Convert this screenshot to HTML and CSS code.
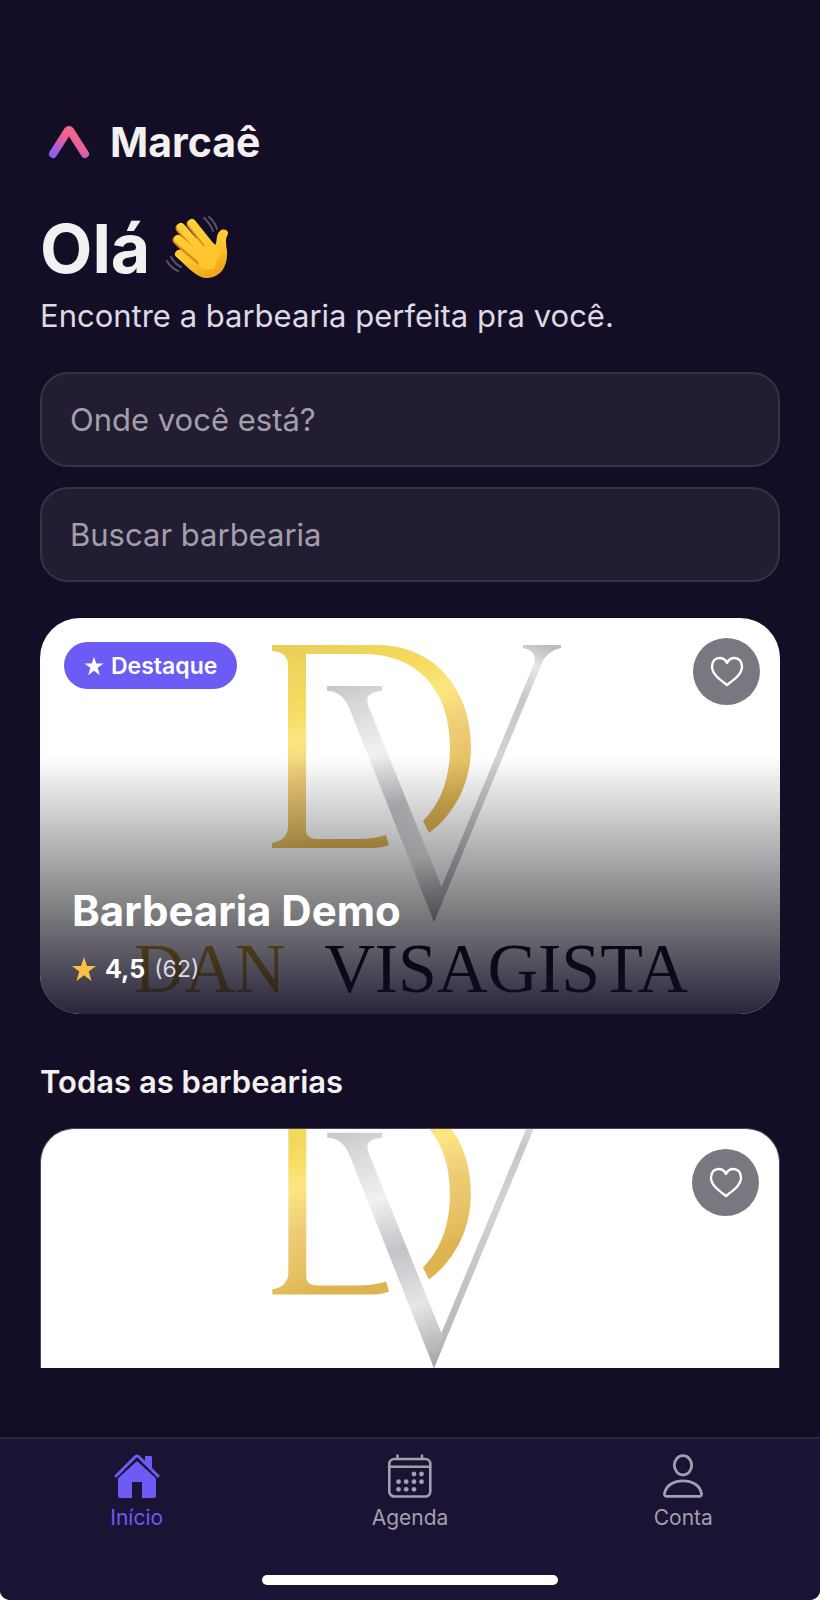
FILE: index.html
```html
<!DOCTYPE html>
<html lang="pt-BR">
<head>
    <meta charset="UTF-8">
    <meta name="viewport" content="width=device-width, initial-scale=1.0">
    <title>Marcaê</title>
    <link rel="stylesheet" href="styles.css">
</head>
<body>

    <!-- shared drawings -->
    <svg class="defs" width="0" height="0" aria-hidden="true">
        <defs>
            <linearGradient id="gold" gradientUnits="userSpaceOnUse" x1="230" y1="20" x2="300" y2="220">
                <stop offset="0" stop-color="#e8cd55" />
                <stop offset="0.2" stop-color="#eed55c" />
                <stop offset="0.35" stop-color="#f5dc60" />
                <stop offset="0.5" stop-color="#fde680" />
                <stop offset="0.68" stop-color="#efcd78" />
                <stop offset="0.9" stop-color="#e5c062" />
                <stop offset="1" stop-color="#deb450" />
            </linearGradient>
            <linearGradient id="silver" gradientUnits="userSpaceOnUse" x1="300" y1="68" x2="400" y2="300">
                <stop offset="0" stop-color="#c9c9cd" />
                <stop offset="0.1" stop-color="#d8d8da" />
                <stop offset="0.3" stop-color="#f1f1f1" />
                <stop offset="0.52" stop-color="#c3c3c9" />
                <stop offset="0.75" stop-color="#e6e6e7" />
                <stop offset="1" stop-color="#a5a5a9" />
            </linearGradient>
            <linearGradient id="silver-arm" gradientUnits="userSpaceOnUse" x1="505" y1="27" x2="394" y2="304">
                <stop offset="0" stop-color="#bcbcc0" />
                <stop offset="0.08" stop-color="#e6e6e8" />
                <stop offset="0.2" stop-color="#c6c6ca" />
                <stop offset="0.4" stop-color="#d3d3d7" />
                <stop offset="1" stop-color="#b2b2b8" />
            </linearGradient>
            <g id="dv-logo">
                <path fill="url(#gold)" d="M232 27H337C395 27 431 72 431 129C431 164 415 196 389 215L383 203C401 185 410 160 410 129C410 75 380 36 323 36H266V212Q266 221 278 221H318Q334 221 346 217L349 227Q342 230 333 230H232V225Q248 222 248 208V47Q248 34 232 33Z" />
                <path fill="url(#silver-arm)" d="M483 27H521V30Q507 33 502 45L394 304L391 295L401 270L494 46Q498 33 483 30Z" />
                <path fill="url(#silver)" d="M287 68H342V73C328 74 324 80 330 92L402 270L403 282L394 304L310 92Q303 73 287 73Z" />
            </g>
            <path id="heart" d="M17 29C12 25 2 19 2 10.500C2 5 5.500 2 9.500 2C13 2 15.700 4 17 7C18.300 4 21 2 24.500 2C28.500 2 32 5 32 10.500C32 19 22 25 17 29Z" />
        </defs>
    </svg>

    <div class="app">
        <main class="content">
            <header class="brand">
                <svg class="brand-mark" viewBox="0 0 42 36" aria-hidden="true">
                    <defs>
                        <linearGradient id="brand-gradient" x1="0" y1="1" x2="0.600" y2="0.200">
                            <stop offset="0" stop-color="#8b5cf6" />
                            <stop offset="0.25" stop-color="#a95fdc" />
                            <stop offset="0.7" stop-color="#e8609c" />
                            <stop offset="1" stop-color="#f0668e" />
                        </linearGradient>
                    </defs>
                    <path d="M5 30L19 8Q21 4 23 8L37 30" fill="none" stroke="url(#brand-gradient)" stroke-width="8" stroke-linecap="round" stroke-linejoin="round" />
                </svg>
                <span class="brand-name">Marcaê</span>
            </header>

            <div class="greeting">
                <h1>Olá</h1>
                <svg class="wave" viewBox="0 0 64 66" role="img" aria-label="Mão acenando">
                    <defs>
                        <linearGradient id="skin" gradientUnits="userSpaceOnUse" x1="15" y1="8" x2="44" y2="64">
                            <stop offset="0" stop-color="#ffd13d" />
                            <stop offset="0.6" stop-color="#ffc62f" />
                            <stop offset="1" stop-color="#f0a01c" />
                        </linearGradient>
                    </defs>
                    <path d="M12 37L20 28L37 20L49 30C52 27 49 20 54 16C57 13 63 15 62 19C59 24 60 29 61 36C62 51 55 62 42 63C33 64 25 56 10 41Z" fill="url(#skin)" />
                    <g fill="none" stroke-linecap="round">
                        <path d="M25 9L45 34" stroke="#d98b18" stroke-width="9" />
                        <path d="M26 8L46 33" stroke="url(#skin)" stroke-width="8" />
                        <path d="M14 13L35 38" stroke="#d98b18" stroke-width="9" />
                        <path d="M15 12L37 37" stroke="url(#skin)" stroke-width="8" />
                        <path d="M11 25L32 45" stroke="#d98b18" stroke-width="9" />
                        <path d="M12 24L34 43" stroke="url(#skin)" stroke-width="8" />
                        <path d="M13 39L31 54" stroke="url(#skin)" stroke-width="8" />
                        <path d="M38 3Q44 8 47 16M43 2Q49 7 51 14M1 46Q5 53 12 56M5 42Q9 49 15 52" stroke="#55536a" stroke-width="2" />
                    </g>
                    <path d="M26 37L46 27L54 36L48 54L36 54Z" fill="#ffc62f" />
                </svg>
            </div>
            <p class="subtitle">Encontre a barbearia perfeita pra você.</p>

            <form class="search">
                <input type="text" aria-label="Onde você está?" placeholder="Onde você está?">
                <input type="text" aria-label="Buscar barbearia" placeholder="Buscar barbearia">
            </form>

            <article class="card featured">
                <svg class="photo" viewBox="0 0 740 396" preserveAspectRatio="xMidYMid slice" role="img" aria-label="Dan Visagista">
                    <use href="#dv-logo" />
                    <text class="photo-text gold-text" x="94" y="374">DAN</text>
                    <text class="photo-text" x="648" y="374" text-anchor="end">VISAGISTA</text>
                </svg>
                <div class="overlay">
                    <div class="card-top">
                        <span class="badge">
                            <svg class="badge-star" viewBox="0 0 24 24" aria-hidden="true"><path fill="#fff" d="M12 1L14.700 9H23.500L16.400 14.200L19 23L12 17.700L5 23L7.600 14.200L0.500 9H9.300Z" /></svg>
                            Destaque
                        </span>
                        <button type="button" class="favorite" aria-label="Favoritar">
                            <svg viewBox="0 0 34 31"><use href="#heart" /></svg>
                        </button>
                    </div>
                    <div class="card-info">
                        <h2>Barbearia Demo</h2>
                        <p class="rating">
                            <svg class="rating-star" viewBox="0 0 24 24" aria-hidden="true"><path fill="#fdbf45" d="M12 0L15 9H24L16.700 14.400L19.500 24L12 18.200L4.500 24L7.300 14.400L0 9H9Z" /></svg>
                            <strong>4,5</strong>
                            <span>(62)</span>
                        </p>
                    </div>
                </div>
            </article>

            <h3 class="section-title">Todas as barbearias</h3>

            <article class="card listed">
                <svg class="photo" viewBox="0 64 740 240" preserveAspectRatio="xMidYMid slice" aria-hidden="true">
                    <use href="#dv-logo" />
                </svg>
                <div class="card-top">
                    <button type="button" class="favorite" aria-label="Favoritar">
                        <svg viewBox="0 0 34 31"><use href="#heart" /></svg>
                    </button>
                </div>
            </article>
        </main>

        <nav class="tabs">
            <ul>
                <li>
                    <a href="#inicio" class="active">
                        <svg viewBox="0 0 46 44" aria-hidden="true">
                            <path d="M23 7L42 24V42Q42 44 40 44H28V28H18V44H6Q4 44 4 42V24Z" fill="currentColor" />
                            <path d="M2 22L23 2L44 22" fill="none" stroke="#1a1333" stroke-width="6" />
                            <path d="M31 2H37Q38 2 38 3V15L31 9Z" fill="currentColor" />
                            <path d="M2 22L21 3Q23 1 25 3L44 22" fill="none" stroke="currentColor" stroke-width="3" stroke-linecap="round" />
                        </svg>
                        Início
                    </a>
                </li>
                <li>
                    <a href="#agenda">
                        <svg viewBox="0 0 46 44" aria-hidden="true">
                            <g fill="none" stroke="currentColor" stroke-width="2.600" stroke-linecap="round">
                                <rect x="2.300" y="5" width="41" height="37.500" rx="5" />
                                <path d="M2 12.800H43M10.500 1.500V5M35 1.500V5" />
                            </g>
                            <g fill="currentColor">
                                <circle cx="27" cy="20" r="2.400" /><circle cx="34.500" cy="20" r="2.400" />
                                <circle cx="11.500" cy="27.700" r="2.400" /><circle cx="19.200" cy="27.700" r="2.400" /><circle cx="27" cy="27.700" r="2.400" /><circle cx="34.500" cy="27.700" r="2.400" />
                                <circle cx="11.500" cy="35.300" r="2.400" /><circle cx="19.200" cy="35.300" r="2.400" /><circle cx="27" cy="35.300" r="2.400" />
                            </g>
                        </svg>
                        Agenda
                    </a>
                </li>
                <li>
                    <a href="#conta">
                        <svg viewBox="0 0 46 44" aria-hidden="true">
                            <g fill="none" stroke="currentColor" stroke-width="2.800" stroke-linejoin="round">
                                <ellipse cx="23" cy="11.300" rx="8.700" ry="9.700" />
                                <path d="M7 42.300Q4 42.300 4.500 39.500C6 31 14 26.800 23 26.800C32 26.800 40 31 41.500 39.500Q42 42.300 39 42.300Z" />
                            </g>
                        </svg>
                        Conta
                    </a>
                </li>
            </ul>
            <div class="home-indicator"></div>
        </nav>
    </div>

</body>
</html>
```
FILE: styles.css
```css
* {
    box-sizing: border-box;
}

body {
    margin: 0;
    background-color: #ffffff;
    font-family: Inter, sans-serif;
    color: #f3f0f0;
}

h1, h2, h3, p, ul {
    margin: 0;
    padding: 0;
}

.defs {
    position: absolute;
}

.app {
    min-height: 100vh;
    display: flex;
    flex-direction: column;
    background-color: #130e26;
    border-radius: 0 0 10px 10px;
    overflow: hidden;
}

.content {
    flex: 1;
    padding: 118px 40px 68px;
}

/* header */
.brand {
    display: flex;
    align-items: center;
    gap: 20px;
    height: 48px;
    padding-left: 8px;
}

.brand-mark {
    width: 42px;
    height: 36px;
}

.brand-name {
    font-size: 41px;
    font-weight: 700;
    line-height: 48px;
}

.greeting {
    display: flex;
    align-items: center;
    gap: 16px;
    margin-top: 42px;
}

.greeting h1 {
    font-size: 68px;
    font-weight: 700;
    line-height: 80px;
}

.wave {
    width: 64px;
    height: 66px;
}

.subtitle {
    margin-top: 8px;
    font-size: 31px;
    line-height: 40px;
    color: #dcdae2;
}

/* search */
.search {
    display: flex;
    flex-direction: column;
    gap: 20px;
    margin-top: 36px;
}

.search input {
    width: 100%;
    height: 95px;
    padding: 0 28px;
    border: 2px solid #373346;
    border-radius: 28px;
    background-color: #221d33;
    font-family: inherit;
    font-size: 31px;
    color: #f3f0f0;
    outline: none;
}

.search input::placeholder {
    color: #a19fa9;
    opacity: 1;
}

/* cards */
.card {
    display: grid;
    overflow: hidden;
    background-color: #ffffff;
}

.card > * {
    grid-area: 1 / 1;
}

.photo {
    display: block;
    width: 100%;
    height: 100%;
}

.photo-text {
    font-family: "Liberation Serif", serif;
    font-size: 70px;
    fill: #05050c;
}

.gold-text {
    fill: #c59a10;
}

.featured {
    height: 396px;
    margin-top: 36px;
    border-radius: 40px;
    background-color: #2b263a;
}

.featured .photo {
    background-color: #ffffff;
}

.overlay {
    display: flex;
    flex-direction: column;
    justify-content: space-between;
    background: linear-gradient(rgba(0, 0, 0, 0) 35%, rgba(5, 4, 10, 0.52) 74%, rgba(18, 13, 38, 0.9) 100%);
}

.card-top {
    display: flex;
    justify-content: space-between;
    align-items: flex-start;
    padding: 20px 20px 0 24px;
}

.badge {
    display: flex;
    align-items: center;
    gap: 7px;
    height: 47px;
    margin-top: 4px;
    padding: 0 20px;
    border-radius: 24px;
    background-color: #6c5bf5;
    color: #ffffff;
    font-size: 23px;
    font-weight: 600;
}

.badge-star {
    width: 20px;
    height: 20px;
}

.favorite {
    width: 67px;
    height: 67px;
    margin-left: auto;
    padding: 0;
    display: grid;
    place-items: center;
    border: none;
    border-radius: 50%;
    background-color: #7a7780;
    cursor: pointer;
}

.favorite svg {
    width: 34px;
    height: 31px;
    fill: none;
    stroke: #ffffff;
    stroke-width: 2.4;
    stroke-linejoin: round;
}

.card-info {
    padding: 0 32px 29px;
    color: #ffffff;
}

.card-info h2 {
    font-size: 42px;
    font-weight: 700;
    line-height: 48px;
}

.rating {
    display: flex;
    align-items: center;
    gap: 9px;
    margin-top: 18px;
    font-size: 23px;
    line-height: 32px;
}

.rating strong {
    font-size: 25px;
}

.rating span {
    color: #dcdae2;
}

.rating-star {
    width: 24px;
    height: 24px;
}

.section-title {
    margin-top: 48px;
    font-size: 31px;
    font-weight: 600;
    line-height: 40px;
}

.listed {
    height: 240px;
    margin-top: 26px;
    border: 1px solid #4a4658;
    border-bottom: none;
    border-radius: 34px 34px 0 0;
}

/* bottom tabs */
.tabs {
    display: flex;
    flex-direction: column;
    align-items: center;
    padding: 15px 0;
    border-top: 2px solid #2c2643;
    background-color: #1a1333;
}

.tabs ul {
    display: grid;
    grid-template-columns: repeat(3, 1fr);
    width: 100%;
    list-style: none;
}

.tabs a {
    display: flex;
    flex-direction: column;
    align-items: center;
    gap: 6px;
    color: #a39faf;
    font-size: 21px;
    line-height: 28px;
    text-decoration: none;
}

.tabs a.active {
    color: #6c5bf5;
}

.tabs svg {
    width: 46px;
    height: 44px;
}

.home-indicator {
    width: 36%;
    height: 10px;
    margin-top: 43px;
    border-radius: 5px;
    background-color: #ffffff;
}
```
